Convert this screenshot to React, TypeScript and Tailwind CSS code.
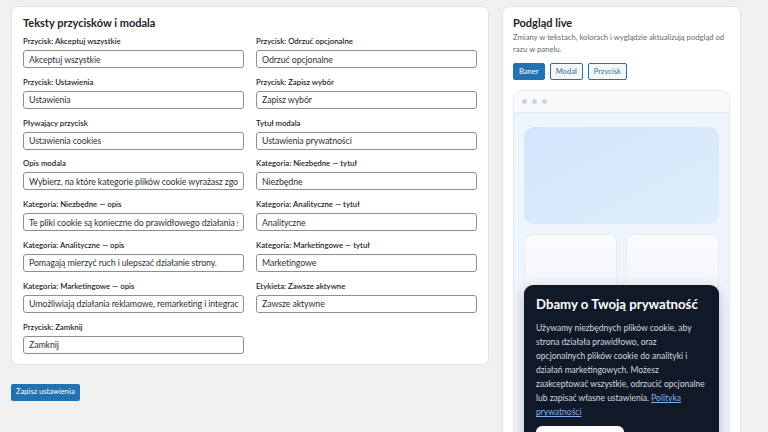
import type { ReactNode } from "react";

type Field = { label: string; value: string };

const fields: Field[] = [
  { label: "Przycisk: Akceptuj wszystkie", value: "Akceptuj wszystkie" },
  { label: "Przycisk: Odrzuć opcjonalne", value: "Odrzuć opcjonalne" },
  { label: "Przycisk: Ustawienia", value: "Ustawienia" },
  { label: "Przycisk: Zapisz wybór", value: "Zapisz wybór" },
  { label: "Pływający przycisk", value: "Ustawienia cookies" },
  { label: "Tytuł modala", value: "Ustawienia prywatności" },
  {
    label: "Opis modala",
    value: "Wybierz, na które kategorie plików cookie wyrażasz zgodę. Możesz zmienić wybór w dowolnym momencie.",
  },
  { label: "Kategoria: Niezbędne — tytuł", value: "Niezbędne" },
  {
    label: "Kategoria: Niezbędne — opis",
    value: "Te pliki cookie są konieczne do prawidłowego działania strony i nie można ich wyłączyć.",
  },
  { label: "Kategoria: Analityczne — tytuł", value: "Analityczne" },
  { label: "Kategoria: Analityczne — opis", value: "Pomagają mierzyć ruch i ulepszać działanie strony." },
  { label: "Kategoria: Marketingowe — tytuł", value: "Marketingowe" },
  {
    label: "Kategoria: Marketingowe — opis",
    value: "Umożliwiają działania reklamowe, remarketing i integracje z serwisami zewnętrznymi.",
  },
  { label: "Etykieta: Zawsze aktywne", value: "Zawsze aktywne" },
  { label: "Przycisk: Zamknij", value: "Zamknij" },
];

function TextField({ label, value }: Field) {
  return (
    <label className="flex flex-col">
      <span className="h-[10px] text-[7.8px] leading-[10px] font-semibold text-[#1d2327] mb-[4px]">
        {label}
      </span>
      <input
        readOnly
        value={value}
        className="h-[18px] w-full rounded-[3px] border border-[#8c8f94] bg-white px-[5px] text-[8.8px] tracking-[-0.1px] text-[#2c3338] outline-none"
      />
    </label>
  );
}

function Card({ children, className = "" }: { children: ReactNode; className?: string }) {
  return (
    <section className={`rounded-[7px] bg-white border border-[#e3e4e6] ${className}`}>
      {children}
    </section>
  );
}

function Tab({ label, active }: { label: string; active?: boolean }) {
  return (
    <button
      className={
        active
          ? "h-[17px] px-[5px] rounded-[2px] bg-[#2271b1] border border-[#2271b1] text-[7.6px] text-white"
          : "h-[17px] px-[5px] rounded-[2px] bg-[#f6f7f7] border border-[#2271b1] text-[7.6px] text-[#2271b1]"
      }
    >
      {label}
    </button>
  );
}

function Preview() {
  return (
    <div className="rounded-[9px] border border-[#e2e8f0] overflow-hidden bg-[#eff5fd]">
      <div className="h-[22px] flex items-center gap-[5px] px-[8px] bg-[#f8fafc] border-b border-[#e5eaf1]">
        <span className="w-[5px] h-[5px] rounded-full bg-[#cbd5e1]" />
        <span className="w-[5px] h-[5px] rounded-full bg-[#cbd5e1]" />
        <span className="w-[5px] h-[5px] rounded-full bg-[#cbd5e1]" />
      </div>
      <div className="px-[10px] pt-[14px] flex flex-col">
        <div className="h-[97px] rounded-[10px] bg-gradient-to-br from-[#d5e4fb] to-[#ddedfb]" />
        <div className="grid grid-cols-2 gap-[9px] mt-[10px] h-[70px]">
          <div className="rounded-[8px] bg-gradient-to-b from-[#fbfcff] to-[#f1f4f8] border border-[#e8edf4]" />
          <div className="rounded-[8px] bg-gradient-to-b from-[#fbfcff] to-[#f1f4f8] border border-[#e8edf4]" />
        </div>
        <div className="-mt-[19px] relative rounded-[9px] bg-[#111827] px-[12px] pt-[10px] pb-[14px] shadow-[0_4px_14px_rgba(15,23,42,0.25)]">
          <h3 className="text-[13.2px] leading-[18px] font-bold text-white">Dbamy o Twoją prywatność</h3>
          <p className="mt-[8px] text-[8.5px] leading-[14px] text-[#d4d8df]">
            Używamy niezbędnych plików cookie, aby strona działała prawidłowo, oraz opcjonalnych plików
            cookie do analityki i działań marketingowych. Możesz zaakceptować wszystkie, odrzucić
            opcjonalne lub zapisać własne ustawienia.{" "}
            <a className="text-[#7cb4f5] underline">Polityka</a>{" "}
            <a className="text-[#7cb4f5] underline">prywatności</a>
          </p>
          <div className="mt-[7px] h-[20px] w-[88px] rounded-[6px] bg-white" />
        </div>
      </div>
    </div>
  );
}

export default function App() {
  return (
    <div
      className="min-h-screen h-[432px] overflow-hidden bg-[#f0f0f1] pl-[11px] pt-[6px] flex gap-[13px] items-start"
      style={{ fontFamily: "Lato, 'Noto Sans', sans-serif" }}
    >
      <div className="w-[478px] flex flex-col">
        <Card className="px-[11px] pt-[9px] pb-[10px]">
          <h2 className="text-[11px] leading-[14px] font-bold text-[#1d2327] mb-[6px]">
            Teksty przycisków i modala
          </h2>
          <div className="grid grid-cols-2 gap-x-[12px] gap-y-[8.8px]">
            {fields.map((f) => (
              <TextField key={f.label} {...f} />
            ))}
          </div>
        </Card>
        <div className="mt-[19px] flex">
          <button className="h-[17px] px-[5px] rounded-[2px] bg-[#2271b1] text-[7.6px] text-white">
            Zapisz ustawienia
          </button>
        </div>
      </div>

      <Card className="w-[239px] px-[10px] pt-[9px] pb-[12px]">
        <h2 className="text-[11px] leading-[14px] font-bold text-[#1d2327]">Podgląd live</h2>
        <p className="mt-[1px] text-[7.7px] leading-[12px] text-[#646970]">
          Zmiany w tekstach, kolorach i wyglądzie aktualizują podgląd od razu w panelu.
        </p>
        <div className="flex gap-[5px] mt-[8px] mb-[10px]">
          <Tab label="Baner" active />
          <Tab label="Modal" />
          <Tab label="Przycisk" />
        </div>
        <Preview />
      </Card>
    </div>
  );
}
